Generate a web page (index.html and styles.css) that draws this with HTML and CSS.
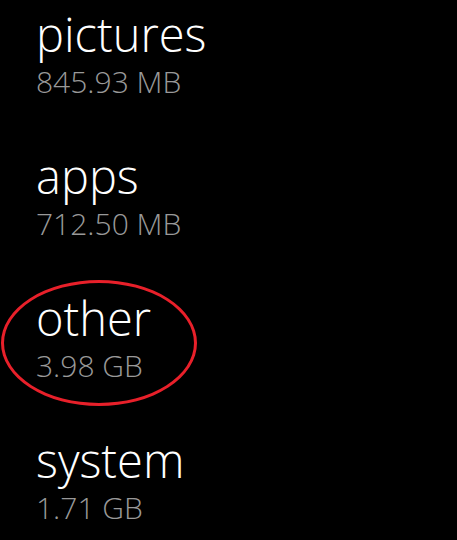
FILE: index.html
```html
<!DOCTYPE html>
<html>
<head>
<meta charset="utf-8">
<link rel="stylesheet" href="styles.css">
</head>
<body>
<ul class="list">
  <li class="item"><div class="name">pictures</div><div class="size">845.93 MB</div></li>
  <li class="item"><div class="name">apps</div><div class="size">712.50 MB</div></li>
  <li class="item marked"><div class="name">other</div><div class="size">3.98 GB</div><span class="ring"></span></li>
  <li class="item last"><div class="name">system</div><div class="size">1.71 GB</div></li>
</ul>
</body>
</html>
```
FILE: styles.css
```css
html, body {
  margin: 0;
  background: #000;
  height: 100%;
  overflow: hidden;
}
.list {
  list-style: none;
  margin: 0;
  padding: 6px 0 0 36px;
  font-family: "Open Sans", "Noto Sans", sans-serif;
}
.item {
  position: relative;
  height: 142px;
}
.item.last {
  height: auto;
}
.name {
  color: #fff;
  font-size: 47px;
  font-weight: 300;
  line-height: 56px;
}
.size {
  color: #999;
  font-size: 30px;
  font-weight: 300;
  line-height: 40px;
}
.ring {
  position: absolute;
  left: -35px;
  top: -10px;
  width: 190px;
  height: 120px;
  border: 3px solid #e8202a;
  border-radius: 50%;
}
```
